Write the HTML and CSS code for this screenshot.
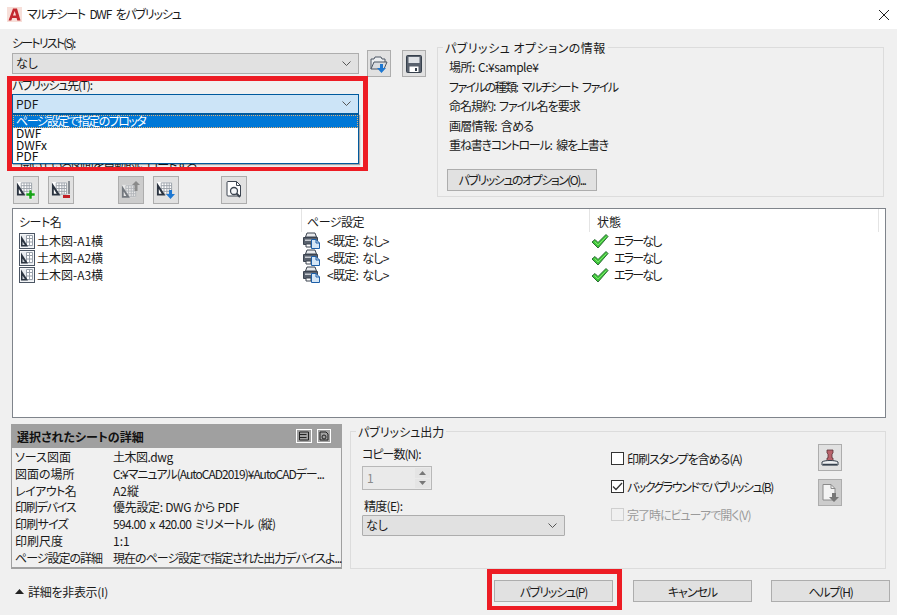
FILE: index.html
```html
<!DOCTYPE html>
<html lang="ja">
<head>
<meta charset="utf-8">
<title>マルチシート DWF をパブリッシュ</title>
<link rel="stylesheet" href="styles.css">
</head>
<body>
<svg class="defs" width="0" height="0">
  <symbol id="sheet" viewBox="0 0 16 16">
    <rect x="0.500" y="0.500" width="15" height="15" fill="#fff" stroke="#4b5563"/>
    <rect x="1.500" y="1.500" width="13" height="13" fill="#e8ebef"/>
    <path d="M7.500 2.500h6v10h-6zM10.500 2.500v10M7.500 5.500h6M7.500 9h6" fill="#fff" stroke="#98a0aa"/>
    <path d="M2 2.500 9 13.500H2z" fill="#2b3440"/>
    <path d="M3.500 8.500 5.800 12H3.500z" fill="#cfd4da"/>
  </symbol>
  <symbol id="sheet-plain" viewBox="0 0 18 16">
    <path d="M1 .5h15.500v14H1z" fill="#fff"/>
    <path d="M5.500 1.500h11v12h-11zM8.500 1.500v12M11.500 1.500v12M14 1.500v12M5.500 4.500h11M5.500 7.500h11M5.500 10.500h11" fill="none" stroke="#9aa0a8"/>
    <path d="M1 1 10 15H1z" fill="#2b3440"/>
    <path d="M3 8 6 13H3z" fill="#fff"/>
  </symbol>
  <symbol id="printer" viewBox="0 0 17 17">
    <path d="M4 1h8l1.500 4h-11z" fill="#e8eaed" stroke="#3c4450"/>
    <path d="M.5 5.500h14v7h-14z" fill="#59616d" stroke="#3c4450"/>
    <path d="M2 7.500h8v1.500H2z" fill="#c7cbd1"/>
    <path d="M3 12h5v3H3z" fill="#fff" stroke="#3c4450"/>
    <path d="M8.500 7.500h4.500l3.500 3.500v5.500h-8z" fill="#d5e6f6" stroke="#1d5fa8"/>
    <path d="M13 7.500V11h3.500" fill="none" stroke="#1d5fa8"/>
  </symbol>
  <symbol id="check" viewBox="0 0 18 16">
    <path d="M1 9 4 6.500 7 9.500 15 1.500 17 3.500 7 15z" fill="#3ec83a" stroke="#2c6a35"/>
    <path d="M3.500 8.500 7 12 15.500 3.500" fill="none" stroke="#7fe36d"/>
  </symbol>
</svg>

<main class="dialog">
  <header class="titlebar">
    <svg class="app-icon" viewBox="0 0 15 15" width="15" height="15">
      <rect width="15" height="15" fill="#f7dfd9"/>
      <path d="M1.500 13.500 6 1.500h4l3.500 12h-3.200l-.7-2.600H5.200l-.9 2.600zM6 8.500h3L7.700 4z" fill="#c3282f"/>
    </svg>
    <h1 class="title ls-12">マルチシート DWF をパブリッシュ</h1>
    <svg class="close" viewBox="0 0 10 10" width="10" height="10">
      <path d="M0 0 10 10M10 0 0 10" stroke="#222" fill="none"/>
    </svg>
  </header>

  <div class="body">
    <section class="top">
      <div class="left">
        <label class="label label-first ls-18">シートリスト(S):</label>
        <div class="select-row">
          <div class="select">
            <span>なし</span>
            <svg class="chevron" viewBox="0 0 9 5" width="9" height="5"><path d="M.5.500 4.500 4.500 8.500.500" fill="none" stroke="#555"/></svg>
          </div>
          <button class="tool tool-tall folder" type="button" aria-label="開く">
            <svg viewBox="0 0 20 20" width="20" height="20">
              <path d="M2 15V5h3l1-2h6l1 2h3v3" fill="#eceef0" stroke="#4b5563"/>
              <path d="M2 15 5 8h13l-3 7z" fill="#d9dce0" stroke="#4b5563"/>
              <path d="M11 10h3v4h3l-4.500 5L8 14h3z" fill="#1e78d2"/>
            </svg>
          </button>
          <button class="tool tool-tall save" type="button" aria-label="保存">
            <svg viewBox="0 0 18 20" width="18" height="20">
              <path d="M1.500 2.500a1 1 0 0 1 1-1h13a1 1 0 0 1 1 1v15a1 1 0 0 1-1 1h-13a1 1 0 0 1-1-1z" fill="#59616d" stroke="#36404c"/>
              <path d="M3.500 3h11v6h-11z" fill="#dfe2e6"/>
              <path d="M4.500 12.500h9v5.500h-9z" fill="#fff"/>
              <path d="M10 14h2v3h-2z" fill="#36404c"/>
            </svg>
          </button>
        </div>
        <label class="label label-second ls-12">パブリッシュ先(T):</label>
        <div class="combo">
          <div class="select select-open">
            <span>PDF</span>
            <svg class="chevron" viewBox="0 0 9 5" width="9" height="5"><path d="M.5.500 4.500 4.500 8.500.500" fill="none" stroke="#555"/></svg>
          </div>
          <ul class="droplist">
            <li class="active ls-15">ページ設定で指定のプロッタ</li>
            <li>DWF</li>
            <li>DWFx</li>
            <li>PDF</li>
          </ul>
          <div class="hidden-row ls-10">開いている図面を自動的にロードする</div>
          <div class="highlight highlight-combo"></div>
        </div>
        <div class="toolbar">
          <button class="tool" type="button" aria-label="追加">
            <svg viewBox="0 0 20 20" width="20" height="20">
              <use href="#sheet-plain" width="17" height="16" y="1"/>
              <path d="M13 10h3v3h3v3h-3v3h-3v-3h-3v-3h3z" fill="#17a317" stroke="#fff" stroke-width=".5"/>
            </svg>
          </button>
          <button class="tool" type="button" aria-label="削除">
            <svg viewBox="0 0 20 20" width="20" height="20">
              <use href="#sheet-plain" width="17" height="16" y="1"/>
              <path d="M18 1v13" stroke="#2b3440"/>
              <path d="M12 15h7v3h-7z" fill="#c21f26"/>
            </svg>
          </button>
          <button class="tool tool-disabled tool-up" type="button" aria-label="上へ">
            <svg viewBox="0 0 20 20" width="20" height="20" opacity=".55">
              <use href="#sheet-plain" width="16" height="15" y="4"/>
              <path d="M15 1l4 4h-2.500v6h-3V5H11z" fill="#555"/>
            </svg>
          </button>
          <button class="tool" type="button" aria-label="下へ">
            <svg viewBox="0 0 20 20" width="20" height="20">
              <use href="#sheet-plain" width="17" height="16" y="1"/>
              <path d="M13 10h3v4h3l-4.500 5L10 14h3z" fill="#1e78d2"/>
            </svg>
          </button>
          <button class="tool tool-preview" type="button" aria-label="プレビュー">
            <svg viewBox="0 0 20 20" width="20" height="20">
              <path d="M3 2.500a1 1 0 0 1 1-1h8.500l4 4V16H4a1 1 0 0 1-1-1z" fill="#fff" stroke="#3c4450"/>
              <path d="M12.500 1.500v4h4" fill="none" stroke="#3c4450"/>
              <circle cx="10" cy="11" r="3.500" fill="#f4f6f8" stroke="#3c4450" stroke-width="1.300"/>
              <path d="M12.500 13.500 16 17" stroke="#3c4450" stroke-width="2"/>
            </svg>
          </button>
        </div>
      </div>

      <div class="group group-info">
        <span class="legend ls-p5">パブリッシュ オプションの情報</span>
        <p class="info ls-5">場所: C:¥sample¥</p>
        <p class="info ls-15">ファイルの種類: マルチシート ファイル</p>
        <p class="info ls-10">命名規約: ファイル名を要求</p>
        <p class="info ls-7">画層情報: 含める</p>
        <p class="info ls-12">重ね書きコントロール: 線を上書き</p>
        <button class="btn btn-options ls-15" type="button">パブリッシュのオプション(O)...</button>
      </div>
    </section>

    <section class="table">
      <div class="thead">
        <div class="th th-name ls-5">シート名</div>
        <div class="th th-page ls-5">ページ設定</div>
        <div class="th th-state">状態</div>
      </div>
      <div class="tr">
        <div class="td td-name"><svg class="ico16" width="16" height="16"><use href="#sheet"/></svg>土木図-A1横</div>
        <div class="td td-page"><svg class="ico17" width="17" height="17"><use href="#printer"/></svg><span class="ls-7">&lt;既定: なし&gt;</span></div>
        <div class="td td-state"><svg class="ico18" width="18" height="16"><use href="#check"/></svg><span class="ls-18">エラーなし</span></div>
      </div>
      <div class="tr">
        <div class="td td-name"><svg class="ico16" width="16" height="16"><use href="#sheet"/></svg>土木図-A2横</div>
        <div class="td td-page"><svg class="ico17" width="17" height="17"><use href="#printer"/></svg><span class="ls-7">&lt;既定: なし&gt;</span></div>
        <div class="td td-state"><svg class="ico18" width="18" height="16"><use href="#check"/></svg><span class="ls-18">エラーなし</span></div>
      </div>
      <div class="tr">
        <div class="td td-name"><svg class="ico16" width="16" height="16"><use href="#sheet"/></svg>土木図-A3横</div>
        <div class="td td-page"><svg class="ico17" width="17" height="17"><use href="#printer"/></svg><span class="ls-7">&lt;既定: なし&gt;</span></div>
        <div class="td td-state"><svg class="ico18" width="18" height="16"><use href="#check"/></svg><span class="ls-18">エラーなし</span></div>
      </div>
    </section>

    <section class="lower">
      <div class="details">
        <div class="details-head">
          <h2 class="details-title">選択されたシートの詳細</h2>
          <svg class="mini" viewBox="0 0 16 14" width="16" height="14">
            <rect x=".5" y=".5" width="15" height="13" fill="none" stroke="#fff"/>
            <path d="M3.500 3h9v8h-9zM3.500 5.500h7M3.500 8.500h7" fill="none" stroke="#222"/>
          </svg>
          <svg class="mini" viewBox="0 0 14 14" width="14" height="14">
            <rect x=".5" y=".5" width="13" height="13" fill="none" stroke="#fff"/>
            <path d="M3 3h6l2 2v6H3z" fill="none" stroke="#222"/>
            <circle cx="7" cy="8" r="2" fill="none" stroke="#222"/>
          </svg>
        </div>
        <dl class="details-body">
          <dt>ソース図面</dt><dd class="ls-5">土木図.dwg</dd>
          <dt>図面の場所</dt><dd class="ls-10">C:¥マニュアル(AutoCAD2019)¥AutoCADデー...</dd>
          <dt class="ls-5">レイアウト名</dt><dd>A2縦</dd>
          <dt class="ls-12">印刷デバイス</dt><dd class="ls-3">優先設定: DWG から PDF</dd>
          <dt class="ls-7">印刷サイズ</dt><dd class="ls-7">594.00 x 420.00 ミリメートル (縦)</dd>
          <dt>印刷尺度</dt><dd>1:1</dd>
          <dt class="ls-10">ページ設定の詳細</dt><dd class="ls-10">現在のページ設定で指定された出力デバイスよ...</dd>
        </dl>
      </div>

      <div class="group group-output">
        <span class="legend">パブリッシュ出力</span>
        <div class="out-left">
          <div class="out-label ls-10">コピー数(N):</div>
          <div class="spinner">
            <span class="spin-value">1</span>
            <div class="spin-btns">
              <span class="spin-btn"><svg viewBox="0 0 7 4" width="7" height="4"><path d="M3.500 0 7 4H0z" fill="#777"/></svg></span>
              <span class="spin-btn"><svg viewBox="0 0 7 4" width="7" height="4"><path d="M0 0h7L3.500 4z" fill="#777"/></svg></span>
            </div>
          </div>
          <div class="out-label out-label-quality ls-7">精度(E):</div>
          <div class="select select-quality">
            <span>なし</span>
            <svg class="chevron" viewBox="0 0 9 5" width="9" height="5"><path d="M.5.500 4.500 4.500 8.500.500" fill="none" stroke="#555"/></svg>
          </div>
        </div>
        <div class="out-right">
          <div class="checks">
            <div class="check"><span class="box"></span><span class="ls-10">印刷スタンプを含める(A)</span></div>
            <div class="check"><span class="box"><svg viewBox="0 0 11 9" width="11" height="9"><path d="M1 4.500 4 7.500 10 1" fill="none" stroke="#333" stroke-width="1.300"/></svg></span><span class="ls-15">バックグラウンドでパブリッシュ(B)</span></div>
            <div class="check check-disabled"><span class="box"></span><span class="ls-10">完了時にビューアで開く(V)</span></div>
          </div>
          <div class="side-tools">
            <button class="tool" type="button" aria-label="スタンプ">
              <svg viewBox="0 0 18 18" width="18" height="18">
                <path d="M6 1h6v3l-1 1v4h1v3H6V9h1V5L6 4z" fill="#b9636b" stroke="#5c3337" stroke-width=".8"/>
                <path d="M1 13c2-2 14-2 16 0v3H1z" fill="#eef0f2" stroke="#36404c"/>
                <path d="M2 15.500h14" stroke="#36404c" stroke-width="1.500"/>
              </svg>
            </button>
            <button class="tool tool-disabled" type="button" aria-label="ファイル">
              <svg viewBox="0 0 18 20" width="18" height="20">
                <path d="M2 1.500h8l4 4V17H2z" fill="#f3f3f3" stroke="#8a8a8a"/>
                <path d="M10 1.500v4h4" fill="none" stroke="#8a8a8a"/>
                <path d="M11 10h4v4h3l-5 5-5-5h3z" fill="#777"/>
              </svg>
            </button>
          </div>
        </div>
      </div>
    </section>

    <footer class="footer">
      <div class="toggle"><svg viewBox="0 0 9 5" width="9" height="5"><path d="M4.500 0 9 5H0z" fill="#222"/></svg><span class="ls-3">詳細を非表示(I)</span></div>
      <div class="actions">
        <div class="primary-wrap">
          <button class="btn btn-main ls-12" type="button">パブリッシュ(P)</button>
          <div class="highlight highlight-publish"></div>
        </div>
        <button class="btn btn-main ls-10" type="button">キャンセル</button>
        <button class="btn btn-main ls-12" type="button">ヘルプ(H)</button>
      </div>
    </footer>
  </div>
</main>
</body>
</html>
```

FILE: styles.css
```css
* { box-sizing: border-box; }

html, body {
  margin: 0;
  padding: 0;
}

body {
  width: 897px;
  height: 615px;
  overflow: hidden;
  font-family: "Noto Sans CJK JP", "Noto Sans", sans-serif;
  font-size: 12px;
  font-feature-settings: "palt";
  color: #1a1a1a;
  background: #f0f0f0;
}

/* Narrow-kana tracking */
.ls-p5 { letter-spacing: .5px; }
.ls-3 { letter-spacing: -.3px; }
.ls-5 { letter-spacing: -.5px; word-spacing: 1px; }
.ls-7 { letter-spacing: -.7px; word-spacing: 2px; }
.ls-10 { letter-spacing: -1px; word-spacing: 2px; }
.ls-12 { letter-spacing: -1.2px; word-spacing: 3px; }
.ls-15 { letter-spacing: -1.5px; word-spacing: 3px; }
.ls-18 { letter-spacing: -1.8px; }

.defs { position: absolute; }

.dialog {
  display: flex;
  flex-direction: column;
  width: 897px;
  height: 615px;
}

/* Title bar */
.titlebar {
  display: flex;
  align-items: center;
  flex: none;
  height: 29px;
  padding: 0 8px 0 7px;
  background: #fff;
}

.app-icon { flex: none; }

.title {
  flex: 1;
  margin: 0 0 0 5px;
  padding-bottom: 2px;
  font-size: 12px;
  font-weight: 400;
  line-height: 16px;
}

.close { flex: none; }

.body {
  display: flex;
  flex-direction: column;
  flex: 1;
  min-height: 0;
  padding: 0 11px 0 12px;
}

/* Top section */
.top {
  display: flex;
  flex: none;
  height: 179px;
}

.left {
  flex: none;
  width: 425px;
}

.label {
  display: block;
  line-height: 16px;
}

.label-first {
  height: 18px;
  margin-top: 6px;
}

.label-second {
  height: 20px;
  padding-top: 3px;
}

.select-row {
  display: flex;
  align-items: center;
  height: 21px;
}

.select {
  display: flex;
  align-items: center;
  justify-content: space-between;
  width: 347px;
  height: 21px;
  padding: 0 4px 1px 3px;
  border: 1px solid #adadad;
  background: #e1e1e1;
  line-height: 16px;
}

.chevron { flex: none; margin-right: 3px; }

.tool {
  display: flex;
  align-items: center;
  justify-content: center;
  width: 26px;
  height: 28px;
  padding: 0;
  border: 1px solid #adadad;
  background: #e1e1e1;
}

.tool-tall { flex: none; width: 24px; height: 27px; }
.folder { margin-left: 8px; }
.save { margin-left: 11px; }

.combo {
  position: relative;
  width: 347px;
  height: 62px;
}

.select-open {
  height: 20px;
  border-color: #005a9e;
  background: #cce4f7;
}

.droplist {
  position: absolute;
  z-index: 2;
  top: 20px;
  left: 0;
  width: 347px;
  height: 50px;
  margin: 0;
  padding: 0;
  list-style: none;
  border: 1px solid #005a9e;
  background: #fff;
  box-shadow: 1px 1px 1px rgba(0, 0, 0, .3);
}

.droplist li {
  height: 11.6px;
  padding-left: 3px;
  line-height: 10px;
  color: #111;
}

.droplist .active {
  height: 13px;
  padding-left: 3px;
  line-height: 11px;
  color: #fff;
  background: #0078d7;
  outline: 1px dotted #e8b070;
  outline-offset: -1px;
}

.hidden-row {
  position: absolute;
  top: 64px;
  left: 8px;
  line-height: 14px;
  white-space: nowrap;
}

.highlight {
  position: absolute;
  z-index: 3;
  border-color: #ed1c24;
  border-style: solid;
  pointer-events: none;
}

.highlight-combo {
  top: -18px;
  left: -5px;
  width: 361px;
  height: 95px;
  border-width: 5px 5px 4px;
}

.toolbar {
  display: flex;
  margin-top: 20px;
  padding-left: 1px;
  gap: 9px;
}

.tool-disabled { background: #cccccc; }
.tool-up { margin-left: 35px; }
.tool-preview { margin-left: 33px; }

/* Group boxes */
.group {
  position: relative;
  border: 1px solid #dcdcdc;
}

.legend {
  position: absolute;
  top: -8px;
  left: 5px;
  padding: 0 2px;
  line-height: 16px;
  white-space: nowrap;
  background: #f0f0f0;
}

.group-info {
  flex: none;
  width: 447px;
  height: 150px;
  margin-top: 18px;
  padding: 9px 0 0 11px;
}

.info {
  margin: 0;
  height: 19.5px;
  line-height: 19.5px;
  white-space: nowrap;
}

.btn {
  padding: 0;
  border: 1px solid #adadad;
  background: #e1e1e1;
  font: inherit;
  color: #1a1a1a;
  font-feature-settings: "palt";
  white-space: nowrap;
}

.btn-options {
  display: block;
  width: 150px;
  height: 22px;
  margin: 14px 0 0 -2px;
}

/* Table */
.table {
  flex: none;
  width: 874px;
  height: 210px;
  border: 1px solid #7f848b;
  background: #fff;
}

.thead, .tr {
  display: grid;
  grid-template-columns: 289px 288px 1fr;
}

.thead { height: 23px; }

.th {
  height: 23px;
  line-height: 25px;
  border-right: 1px solid #e4e4e4;
}

.th-name { padding-left: 6px; }
.th-page { padding-left: 5px; }
.th-state { width: 289px; padding-left: 7px; }

.tr { height: 17px; }

.td {
  display: flex;
  align-items: center;
  height: 17px;
  line-height: 17px;
  white-space: nowrap;
}

.td-name { padding-left: 6px; }
.td-page { padding-left: 1px; }
.td-state { padding-left: 1px; }
.ico16 { margin-right: 2px; }
.ico17 { margin-right: 7px; }
.ico18 { margin-right: 5px; }

/* Lower section */
.lower {
  display: flex;
  flex: none;
  height: 145px;
  margin-top: 6px;
  margin-left: -1px;
}

.details {
  flex: none;
  width: 331px;
  border: 1px solid #a0a0a0;
  border-width: 0 1px 2px;
  background: #f0f0f0;
}

.details-head {
  display: flex;
  align-items: center;
  height: 24px;
  margin: 0 -1px;
  padding: 0 11px 0 6px;
  background: #a0a0a0;
}

.details-title {
  flex: 1;
  margin: 0;
  font-size: 12px;
  font-weight: 700;
  color: #111;
}

.mini { margin-left: 5px; }

.details-body {
  display: grid;
  grid-template-columns: 98px 1fr;
  grid-auto-rows: 16.8px;
  margin: 0;
  padding: 1px 0 0 3px;
  line-height: 16.8px;
}

.details-body dt, .details-body dd {
  margin: 0;
  white-space: nowrap;
}

.group-output {
  display: flex;
  flex: none;
  width: 536px;
  height: 138px;
  margin: 7px 0 0 8px;
}

.out-left {
  flex: none;
  width: 260px;
  padding: 14px 0 0 11px;
}

.out-label { line-height: 16px; height: 20px; }
.out-label-quality { height: 17px; margin-top: 8px; padding-left: 2px; }

.spinner {
  display: flex;
  justify-content: space-between;
  width: 70px;
  height: 24px;
  padding: 1px;
  border: 1px solid #b8b8b8;
  background: #eaeaea;
}

.spin-value { padding-left: 3px; line-height: 20px; color: #8a8a8a; }

.spin-btns {
  display: flex;
  flex-direction: column;
  gap: 1px;
  width: 15px;
}

.spin-btn {
  display: flex;
  align-items: center;
  justify-content: center;
  flex: 1;
  background: #e4e4e4;
}

.select-quality {
  width: 203px;
  height: 21px;
  border-radius: 1px;
}

.out-right {
  display: flex;
  flex: 1;
}

.checks {
  flex: none;
  width: 207px;
  padding-top: 20px;
}

.check {
  display: flex;
  align-items: center;
  height: 13px;
  margin-bottom: 15px;
  line-height: 13px;
  white-space: nowrap;
}

.box {
  display: flex;
  align-items: center;
  justify-content: center;
  flex: none;
  width: 13px;
  height: 13px;
  margin-right: 3px;
  border: 1px solid #333;
  background: #fff;
}

.check-disabled { color: #9a9a9a; }
.check-disabled .box { border-color: #cfcfcf; background: #f0f0f0; }

.side-tools {
  display: flex;
  flex-direction: column;
  gap: 8px;
  padding-top: 12px;
}

.side-tools .tool { width: 24px; height: 27px; }

/* Footer */
.footer {
  display: flex;
  align-items: center;
  justify-content: space-between;
  flex: 1;
  padding-bottom: 2px;
  margin-right: -4px;
}

.toggle {
  display: flex;
  align-items: center;
  gap: 4px;
  padding-left: 3px;
}

.actions {
  display: flex;
  gap: 19px;
}

.primary-wrap { position: relative; margin-right: 1px; }

.btn-main {
  display: block;
  width: 119px;
  height: 22px;
}

.highlight-publish {
  top: -11px;
  left: -7px;
  width: 135px;
  height: 41px;
  border-width: 5px 5px 4px;
}
```
